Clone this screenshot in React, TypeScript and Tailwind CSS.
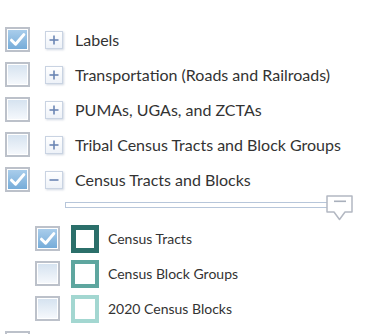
import type { ReactNode } from "react";

function CheckBox({ checked = false }: { checked?: boolean }) {
  return (
    <div className="h-[25px] w-[25px] shrink-0 border-2 border-[#bcc1ca] bg-white p-px">
      <div
        className={`relative h-full w-full ${
          checked
            ? "bg-gradient-to-b from-[#a9cdeb] to-[#76acd9]"
            : "bg-gradient-to-b from-[#d6e3f0] to-[#f5f8fc]"
        }`}
      >
        {checked && (
          <svg viewBox="0 0 19 19" className="absolute inset-0 h-full w-full">
            <path
              d="M3.5 10.2 L7.6 14.2 L15.8 4.6"
              fill="none"
              stroke="#ffffff"
              strokeWidth="3"
              strokeLinecap="round"
              strokeLinejoin="round"
            />
          </svg>
        )}
      </div>
    </div>
  );
}

function Toggle({ open = false }: { open?: boolean }) {
  return (
    <div className="flex h-[18px] w-[18px] shrink-0 items-center justify-center border border-[#c9d3e2] bg-gradient-to-b from-white to-[#eef2f8] shadow-[1px_1px_2px_rgba(120,140,170,0.35)]">
      <svg viewBox="0 0 10 10" className="h-[10px] w-[10px]">
        <rect x="0.5" y="4.2" width="9" height="1.6" fill="#6b86b3" />
        {!open && <rect x="4.2" y="0.5" width="1.6" height="9" fill="#6b86b3" />}
      </svg>
    </div>
  );
}

function LayerRow({ label, checked, open }: { label: string; checked?: boolean; open?: boolean }) {
  return (
    <div className="flex h-[35px] items-center">
      <CheckBox checked={checked} />
      <div className="ml-[15px]">
        <Toggle open={open} />
      </div>
      <span className="ml-3 whitespace-nowrap text-[16px] text-[#333]">{label}</span>
    </div>
  );
}

function SubRow({ label, checked, swatch }: { label: string; checked?: boolean; swatch: ReactNode }) {
  return (
    <div className="flex h-[35px] items-center pl-[30px]">
      <CheckBox checked={checked} />
      <div className="ml-[11px]">{swatch}</div>
      <span className="ml-[9px] whitespace-nowrap text-[14px] text-[#333]">{label}</span>
    </div>
  );
}

function OpacitySlider() {
  return (
    <div className="relative h-[24px] pl-[60px] pt-[5px]">
      <div className="h-[6px] w-[280px] border border-[#b7c6da] bg-white" />
      {/* thumb */}
      <div className="absolute left-[321px] top-[-2px] h-[26px] w-[27px]">
        <svg viewBox="0 0 27 26" className="h-full w-full">
          <path
            d="M1 1 H26 V17 H19 L13.5 24.5 L8 17 H1 Z"
            fill="#ffffff"
            stroke="#b3b8c2"
            strokeWidth="1.5"
            strokeLinejoin="round"
          />
          <rect x="8" y="5.5" width="12" height="1.6" fill="#a9b0bc" />
        </svg>
      </div>
    </div>
  );
}

export default function App() {
  return (
    <div className="h-[334px] w-[382px] overflow-hidden bg-white pl-[5px] pt-[22px] font-['Lato','Liberation_Sans',sans-serif]">
      <LayerRow label="Labels" checked />
      <LayerRow label="Transportation (Roads and Railroads)" />
      <LayerRow label="PUMAs, UGAs, and ZCTAs" />
      <LayerRow label="Tribal Census Tracts and Block Groups" />
      <LayerRow label="Census Tracts and Blocks" checked open />
      <OpacitySlider />
      <SubRow
        label="Census Tracts"
        checked
        swatch={<div className="h-[28px] w-[28px] border-[5px] border-[#2b6f6a] bg-white" />}
      />
      <SubRow
        label="Census Block Groups"
        swatch={<div className="h-[28px] w-[28px] border-4 border-[#5ea69f] bg-white" />}
      />
      <SubRow
        label="2020 Census Blocks"
        swatch={<div className="h-[28px] w-[28px] border-4 border-[#a3d7d1] bg-white" />}
      />
      <LayerRow label="" />
    </div>
  );
}
